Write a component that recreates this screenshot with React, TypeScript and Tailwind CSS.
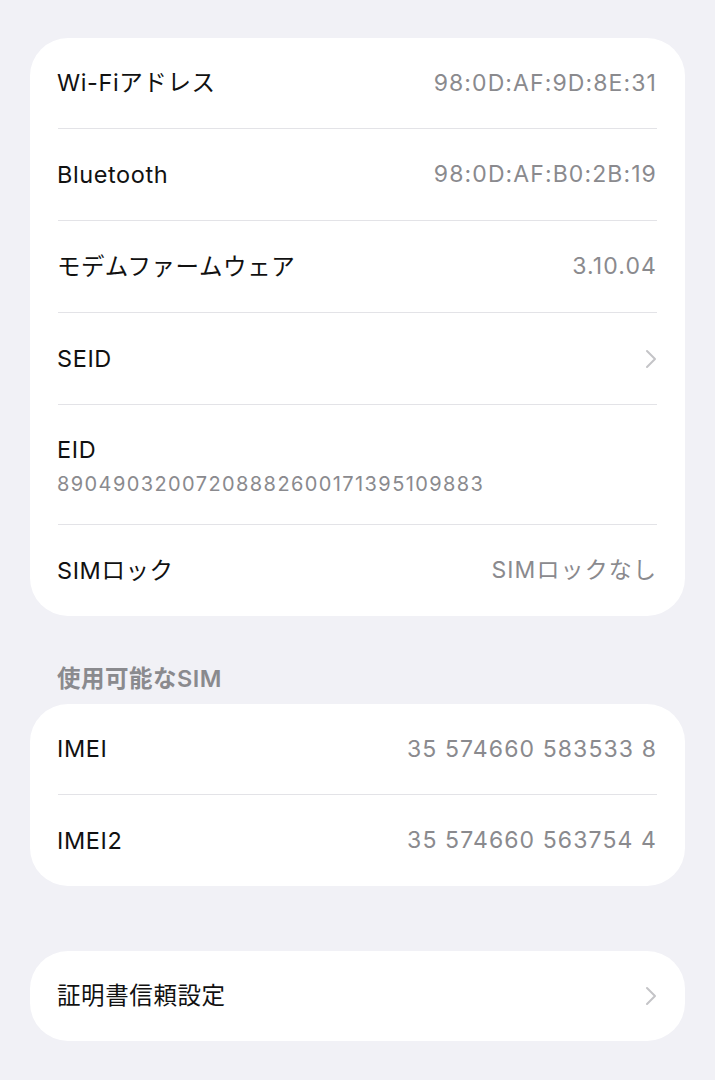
import React from 'react';

const font = { fontFamily: '"Inter", "Noto Sans CJK JP", sans-serif' };

type Row = { label: string; value?: string; chevron?: boolean };

const Chevron = () => (
  <svg width="12" height="20" viewBox="0 0 12 20" fill="none" stroke="#c4c4c7" strokeWidth="2" strokeLinecap="round" strokeLinejoin="round">
    <path d="M2 2l8 8-8 8" />
  </svg>
);

const RowItem = ({ row, first }: { row: Row; first?: boolean }) => (
  <div className={`flex items-center justify-between ${first ? 'h-[90px]' : 'h-[92px] border-t border-[#e3e3e7]'}`}>
    <span className="-ml-[1px] text-[23.5px] text-[#111] tracking-[0.6px]">{row.label}</span>
    {row.value && <span className="text-[23px] text-[#8a8a8e] tracking-[1.1px]">{row.value}</span>}
    {row.chevron && <Chevron />}
  </div>
);

export default function App() {
  return (
    <div className="min-h-[1080px] bg-[#f1f1f6] px-[30px] pt-[38px]" style={font}>
      {/* device info card */}
      <div className="rounded-[38px] bg-white px-[28px]">
        <RowItem first row={{ label: 'Wi-Fiアドレス', value: '98:0D:AF:9D:8E:31' }} />
        <RowItem row={{ label: 'Bluetooth', value: '98:0D:AF:B0:2B:19' }} />
        <RowItem row={{ label: 'モデムファームウェア', value: '3.10.04' }} />
        <RowItem row={{ label: 'SEID', chevron: true }} />
        <div className="h-[120px] border-t border-[#e3e3e7] pt-[30px]">
          <div className="-ml-[1px] text-[23.5px] leading-[30px] text-[#111] tracking-[0.6px]">EID</div>
          <div className="-ml-[1px] mt-[6px] text-[20px] leading-[26px] text-[#8a8a8e] tracking-[1.4px]">
            89049032007208882600171395109883
          </div>
        </div>
        <RowItem row={{ label: 'SIMロック', value: 'SIMロックなし' }} />
      </div>

      {/* section header */}
      <div className="flex h-[88px] items-end px-[28px] pb-[11px]">
        <span className="-ml-[1px] text-[23.5px] leading-[28px] font-semibold text-[#8a8a8e] tracking-[0.5px]">使用可能なSIM</span>
      </div>

      <div className="rounded-[38px] bg-white px-[28px]">
        <RowItem first row={{ label: 'IMEI', value: '35 574660 583533 8' }} />
        <RowItem row={{ label: 'IMEI2', value: '35 574660 563754 4' }} />
      </div>

      <div className="mt-[65px] flex h-[90px] items-center justify-between rounded-[38px] bg-white px-[28px]">
        <span className="-ml-[1px] text-[23.5px] text-[#111] tracking-[0.6px]">証明書信頼設定</span>
        <Chevron />
      </div>
    </div>
  );
}
